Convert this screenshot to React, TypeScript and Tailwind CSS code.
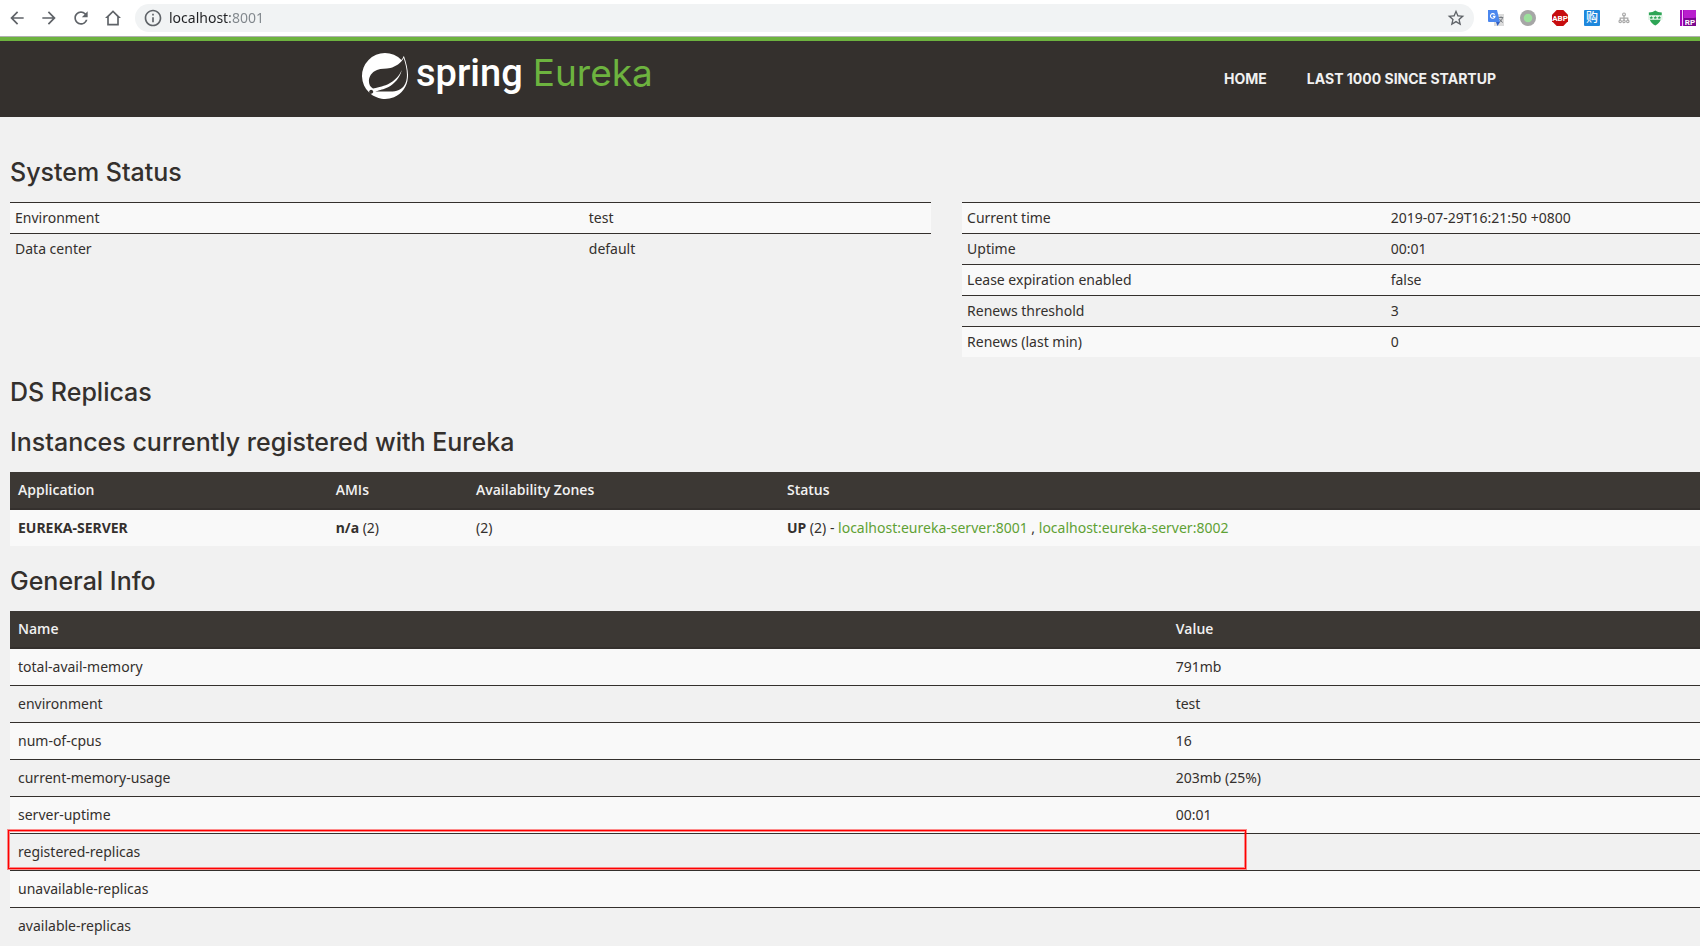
import * as React from "react";

const leftStatus = [
  ["Environment", "test"],
  ["Data center", "default"],
];

const rightStatus = [
  ["Current time", "2019-07-29T16:21:50 +0800"],
  ["Uptime", "00:01"],
  ["Lease expiration enabled", "false"],
  ["Renews threshold", "3"],
  ["Renews (last min)", "0"],
];

const generalInfo = [
  { name: "total-avail-memory", value: "791mb" },
  { name: "environment", value: "test" },
  { name: "num-of-cpus", value: "16" },
  { name: "current-memory-usage", value: "203mb (25%)" },
  { name: "server-uptime", value: "00:01" },
  { name: "registered-replicas", value: "", marked: true },
  { name: "unavailable-replicas", value: "" },
  { name: "available-replicas", value: "" },
];

// Material style 24x24 glyph
function Glyph({ d }: { d: string }) {
  return (
    <svg viewBox="0 0 24 24" className="w-5 h-5 fill-[#5f6368]">
      <path d={d} />
    </svg>
  );
}

function ToolButton({ label, d }: { label: string; d: string }) {
  return (
    <button type="button" aria-label={label} className="shrink-0">
      <Glyph d={d} />
    </button>
  );
}

function Extension({
  label,
  children,
}: {
  label: string;
  children: React.ReactNode;
}) {
  return (
    <button type="button" aria-label={label} className="shrink-0">
      <svg viewBox="0 0 16 16" className="w-4 h-4 overflow-visible">
        {children}
      </svg>
    </button>
  );
}

function BrowserBar() {
  return (
    <div className="flex items-center h-[37px] pb-1 pt-1 bg-white border-b border-[#b0b0b0]">
      <div className="flex items-center gap-3 pl-[7px] pr-3">
        <ToolButton
          label="Back"
          d="M20 11H7.83l5.59-5.59L12 4l-8 8 8 8 1.41-1.41L7.83 13H20v-2z"
        />
        <ToolButton
          label="Forward"
          d="M12 4l-1.41 1.41L16.17 11H4v2h12.17l-5.58 5.59L12 20l8-8z"
        />
        <ToolButton
          label="Reload"
          d="M17.65 6.35A7.958 7.958 0 0 0 12 4c-4.42 0-7.99 3.58-7.99 8s3.57 8 7.99 8c3.73 0 6.84-2.55 7.73-6h-2.08A5.99 5.99 0 0 1 12 18c-3.31 0-6-2.69-6-6s2.69-6 6-6c1.66 0 3.14.69 4.22 1.78L13 11h7V4l-2.35 2.35z"
        />
        <ToolButton
          label="Home"
          d="M12 2.6 2.4 12H5v9h14v-9h2.6L12 2.6zm0 2.9 5 5V19H7v-8.5l5-5z"
        />
      </div>
      <div className="flex items-center flex-1 h-7 pl-2 pr-2 rounded-full bg-[#f1f3f4]">
        <Glyph d="M11 7h2v2h-2V7zm0 4h2v6h-2v-6zm1-9C6.48 2 2 6.48 2 12s4.48 10 10 10 10-4.48 10-10S17.52 2 12 2zm0 18c-4.41 0-8-3.59-8-8s3.59-8 8-8 8 3.59 8 8-3.59 8-8 8z" />
        <input
          type="text"
          aria-label="Address"
          defaultValue="localhost:8001"
          className="flex-1 min-w-0 ml-1.5 outline-none font-['Noto_Sans',sans-serif] text-sm text-transparent bg-clip-text bg-[linear-gradient(90deg,#202124_61px,#80868b_61px)]"
        />
        <ToolButton
          label="Bookmark"
          d="M22 9.24l-7.19-.62L12 2 9.19 8.63 2 9.24l5.46 4.73L5.82 21 12 17.27 18.18 21l-1.63-7.03L22 9.24zM12 15.4l-3.76 2.27 1-4.28-3.32-2.88 4.38-.38L12 6.1l1.71 4.04 4.38.38-3.32 2.88 1 4.28L12 15.4z"
        />
      </div>
      <div className="flex items-center gap-4 pl-3.5 pr-1">
        <Extension label="Translate">
          <rect x="6" y="4" width="10" height="12" fill="#dcdcdc" />
          <path d="M0 0h9l3 12H1a1 1 0 0 1-1-1z" fill="#4b87ee" />
          <path d="M8 12h4l-2.5 4z" fill="#2f5ec4" />
          <path
            d="M6.6 4.6A2.3 2.3 0 1 0 7 6.4H4.9"
            fill="none"
            stroke="#fff"
            strokeWidth="1.1"
          />
          <path
            d="M10.6 7.5h4.6M13 6.4v1.1M14.5 7.6c-.4 2-1.5 3.6-3 4.6M11.6 9c.6 1.6 1.8 2.8 3.2 3.5"
            fill="none"
            stroke="#6f7478"
            strokeWidth=".9"
          />
        </Extension>
        <Extension label="Status">
          <circle cx="8" cy="8" r="8" fill="#a6a6a6" />
          <circle cx="8" cy="8" r="4.3" fill="#9be09b" />
        </Extension>
        <Extension label="Adblock Plus">
          <path d="M4.7 0h6.6L16 4.7v6.6L11.3 16H4.7L0 11.3V4.7z" fill="#c70d0f" />
          <text
            x="8"
            y="11"
            textAnchor="middle"
            className="font-['Roboto',sans-serif] font-bold text-[8px] fill-white"
          >
            ABP
          </text>
        </Extension>
        <Extension label="Shopping">
          <rect width="16" height="16" rx="1" fill="#1e88dd" />
          <text
            x="8"
            y="12"
            textAnchor="middle"
            className="font-['Noto_Sans_CJK_SC',sans-serif] font-medium text-[12px] fill-white"
          >
            购
          </text>
        </Extension>
        <Extension label="Sitemap">
          <g fill="none" stroke="#a8a8a8" strokeWidth="1.2">
            <circle cx="8" cy="4.4" r="1.4" />
            <path d="M8 5.8v4.4M4.2 10.2v-2h7.6v2" />
            <circle cx="4.2" cy="11.4" r="1.2" />
            <circle cx="8" cy="11.4" r="1.2" />
            <circle cx="11.8" cy="11.4" r="1.2" />
          </g>
        </Extension>
        <Extension label="Shield">
          <path
            d="M.8 2.5C3.3 2.5 5.8 1.8 7.3.6c1.5 1.2 4 1.9 6.5 1.9 0 6.5-1.5 10.5-6.5 13-5-2.500-6.500-6.500-6.500-13z"
            fill="#2ea556"
          />
          <path d="M0 5.200h14.600v4.600H0z" fill="#e4f5e9" />
          <path
            d="m3.300 5.800.5 1.300h1.300l-1 .8.4 1.400-1.200-.8-1.200.8.4-1.400-1-.8h1.300zM7.300 5.800l.5 1.300h1.300l-1 .8.4 1.400-1.200-.8-1.200.8.4-1.400-1-.8h1.300zM11.300 5.800l.5 1.300h1.300l-1 .8.4 1.400-1.200-.8-1.200.8.4-1.400-1-.8h1.300z"
            fill="#2ea556"
          />
        </Extension>
        <Extension label="Axure RP">
          <path d="M0 0h16v16H0z" fill="#a308b8" />
          <path d="M4 0h12v7L4 12z" fill="#b91fce" />
          <path d="M2 0h1v16H2z" fill="#f3c8fa" />
          <path d="M4 8h12v8H4z" fill="#7a0790" />
          <text
            x="10"
            y="15"
            textAnchor="middle"
            className="font-['Roboto',sans-serif] font-bold text-[8px] fill-white"
          >
            RP
          </text>
        </Extension>
      </div>
    </div>
  );
}

function SpringMark() {
  return (
    <svg viewBox="0 0 24 24" className="w-[46px] h-[46px] mt-1.5 fill-white">
      <path d="M21.8537 1.4158a10.4504 10.4504 0 0 1-1.284 2.2471A11.9666 11.9666 0 1 0 3.8518 20.7757l.4445.3951a11.9543 11.9543 0 0 0 19.6316-8.2971c.3457-3.0126-.568-6.8649-2.0742-11.458zM5.5805 20.8745a1.0174 1.0174 0 1 1-.1482-1.4323 1.0396 1.0396 0 0 1 .1482 1.4323zm16.1991-3.5806c-2.9385 3.9263-9.2601 2.5928-13.2852 2.7904 0 0-.7161.0494-1.4323.1481 0 0 .2717-.1234.6174-.2469 2.8398-.9877 4.1732-1.1853 5.9018-2.0743 3.2349-1.6545 6.4698-5.2844 7.1118-9.0379-1.2347 3.6053-4.9881 6.7164-8.3959 7.9761-2.3459.8643-6.5685 1.7039-6.5685 1.7039l-.1729-.0988c-2.8645-1.4076-2.9632-7.6304 2.2718-9.6306 2.2966-.889 4.4696-.395 6.9637-.9877 2.6422-.6174 5.7043-2.5929 6.939-5.1857 1.3828 4.1732 3.062 10.643.0493 14.6434z" />
    </svg>
  );
}

function Header() {
  return (
    <header className="bg-[#34302d] border-t-4 border-[#6db33f]">
      <div className="flex justify-between h-[76px] ml-[362px] mr-[184px]">
        <a href="#home" className="flex items-center pb-3">
          <SpringMark />
          <span className="ml-2 font-['Roboto',sans-serif] font-medium text-[38px] leading-10 text-white">
            spring
          </span>
          <span className="ml-2.5 font-['Inter',sans-serif] text-[37px] leading-10 text-[#6db33f]">
            Eureka
          </span>
        </a>
        <nav className="flex items-center font-['Inter',sans-serif] font-bold text-sm text-[#f1f1f1]">
          <a href="#home" className="px-5">
            HOME
          </a>
          <a href="#lastn" className="px-5">
            LAST 1000 SINCE STARTUP
          </a>
        </nav>
      </div>
    </header>
  );
}

function Heading({ children }: { children: React.ReactNode }) {
  return (
    <h1 className="mt-5 mb-[15px] font-['Inter',sans-serif] font-medium text-[25px] leading-[30px]">
      {children}
    </h1>
  );
}

function StatusTable({
  rows,
  nameWidth,
}: {
  rows: string[][];
  nameWidth: string;
}) {
  return (
    <table className="w-full table-fixed self-start">
      <tbody>
        {rows.map(([name, value]) => (
          <tr key={name} className="border-t border-[#34302d] odd:bg-[#f9f9f9]">
            <td className={`p-[5px] ${nameWidth}`}>{name}</td>
            <td className="p-[5px]">{value}</td>
          </tr>
        ))}
      </tbody>
    </table>
  );
}

const headRow =
  "bg-[#3c3834] text-[#f1f1f1] text-left font-['Open_Sans',sans-serif] border-b-2 border-[#34302d]";

export default function App() {
  return (
    <div className="min-h-screen bg-[#f1f1f1] text-[#34302d] font-['Noto_Sans',sans-serif] text-sm leading-5">
      <BrowserBar />
      <Header />
      <main className="pl-2.5 pt-5">
        <Heading>System Status</Heading>
        <div className="grid grid-cols-[54.5%_1fr] gap-x-[31px]">
          <StatusTable rows={leftStatus} nameWidth="w-[62.3%]" />
          <StatusTable rows={rightStatus} nameWidth="w-[57.4%]" />
        </div>

        <Heading>DS Replicas</Heading>
        <Heading>Instances currently registered with Eureka</Heading>
        <table className="w-full table-fixed">
          <thead>
            <tr className={headRow}>
              <th className="p-2 w-[18.8%] font-semibold">Application</th>
              <th className="p-2 w-[8.3%] font-semibold">AMIs</th>
              <th className="p-2 w-[18.4%] font-semibold">
                Availability Zones
              </th>
              <th className="p-2 font-semibold">Status</th>
            </tr>
          </thead>
          <tbody>
            <tr className="bg-[#f9f9f9]">
              <td className="p-2 font-bold">EUREKA-SERVER</td>
              <td className="p-2">
                <b>n/a</b> (2)
              </td>
              <td className="p-2">(2)</td>
              <td className="p-2">
                <b>UP</b> (2) -{" "}
                <a href="#8001" className="text-[#5fa134]">
                  localhost:eureka-server:8001
                </a>{" "}
                ,{" "}
                <a href="#8002" className="text-[#5fa134]">
                  localhost:eureka-server:8002
                </a>
              </td>
            </tr>
          </tbody>
        </table>

        <Heading>General Info</Heading>
        <table className="w-full table-fixed">
          <thead>
            <tr className={headRow}>
              <th className="p-2 w-[68.5%] font-semibold">Name</th>
              <th className="p-2 font-semibold">Value</th>
            </tr>
          </thead>
          <tbody>
            {generalInfo.map((row) => (
              <tr
                key={row.name}
                className="border-t first:border-t-0 border-[#34302d] odd:bg-[#f9f9f9]"
              >
                <td className="relative p-2">
                  {row.name}
                  {row.marked && (
                    <div className="absolute z-10 -left-0.5 -top-1 w-[106.9%] h-[39px] border border-[#ff0000] shadow-[0_0_0_1px_#ff000070,inset_0_0_0_1px_#ff000070]" />
                  )}
                </td>
                <td className="p-2">{row.value}</td>
              </tr>
            ))}
          </tbody>
        </table>
      </main>
    </div>
  );
}
